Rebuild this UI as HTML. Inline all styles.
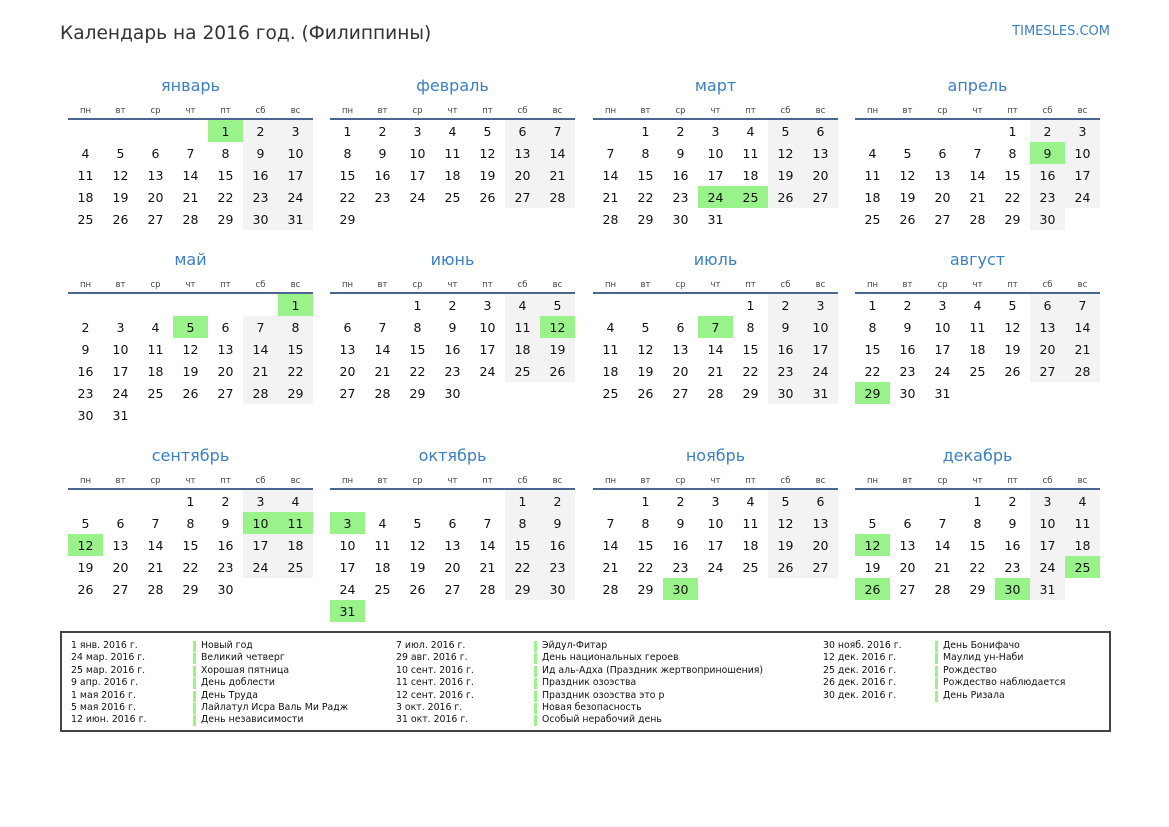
<!DOCTYPE html>
<html><head><meta charset="utf-8"><style>
*{margin:0;padding:0;box-sizing:border-box}
body{width:1169px;height:827px;background:#fff;font-family:"DejaVu Sans","Liberation Sans",sans-serif;position:relative;overflow:hidden;color:#111}
.ttl{position:absolute;left:60px;top:21px;font-size:18.6px;color:#333;line-height:26px}
.site{position:absolute;right:59px;top:23px;font-size:13px;color:#3a7fc1;line-height:18px}
.m{position:absolute;width:245px}
.mt{height:20px;line-height:22px;text-align:center;font-size:16px;color:#3b7fc4}
.hd{display:flex;margin-top:8px;height:15px;line-height:17px}
.hd span{width:35px;text-align:center;font-size:8.5px;color:#444}
.ln{height:2px;background:#4a6590}
table{border-collapse:collapse;border-spacing:0}
td{width:35px;height:22px;text-align:center;font-size:12.5px;padding:1px 0 0 0;line-height:21px}
td.w{background:#f3f3f3}
td.h{background:#99f28a}
.lg{position:absolute;left:60px;top:631px;width:1051px;height:101px;border:2px solid #444}
.c{position:absolute;top:7px;font-size:9.35px;line-height:12.4px;color:#111}
.b{position:relative;padding-left:8px}
.b:before{content:"";position:absolute;left:0;top:1px;width:3px;height:11px;background:#99f28a}
</style></head><body>
<div class="ttl">Календарь на 2016 год. (Филиппины)</div>
<div class="site">TIMESLES.COM</div>

<div class="m" style="left:68px;top:75px"><div class="mt">январь</div><div class="hd"><span>пн</span><span>вт</span><span>ср</span><span>чт</span><span>пт</span><span>сб</span><span>вс</span></div><div class="ln"></div>
<table>
<tr><td></td><td></td><td></td><td></td><td class="h">1</td><td class="w">2</td><td class="w">3</td></tr>
<tr><td>4</td><td>5</td><td>6</td><td>7</td><td>8</td><td class="w">9</td><td class="w">10</td></tr>
<tr><td>11</td><td>12</td><td>13</td><td>14</td><td>15</td><td class="w">16</td><td class="w">17</td></tr>
<tr><td>18</td><td>19</td><td>20</td><td>21</td><td>22</td><td class="w">23</td><td class="w">24</td></tr>
<tr><td>25</td><td>26</td><td>27</td><td>28</td><td>29</td><td class="w">30</td><td class="w">31</td></tr>
</table></div>

<div class="m" style="left:330px;top:75px"><div class="mt">февраль</div><div class="hd"><span>пн</span><span>вт</span><span>ср</span><span>чт</span><span>пт</span><span>сб</span><span>вс</span></div><div class="ln"></div>
<table>
<tr><td>1</td><td>2</td><td>3</td><td>4</td><td>5</td><td class="w">6</td><td class="w">7</td></tr>
<tr><td>8</td><td>9</td><td>10</td><td>11</td><td>12</td><td class="w">13</td><td class="w">14</td></tr>
<tr><td>15</td><td>16</td><td>17</td><td>18</td><td>19</td><td class="w">20</td><td class="w">21</td></tr>
<tr><td>22</td><td>23</td><td>24</td><td>25</td><td>26</td><td class="w">27</td><td class="w">28</td></tr>
<tr><td>29</td><td></td><td></td><td></td><td></td><td></td><td></td></tr>
</table></div>

<div class="m" style="left:593px;top:75px"><div class="mt">март</div><div class="hd"><span>пн</span><span>вт</span><span>ср</span><span>чт</span><span>пт</span><span>сб</span><span>вс</span></div><div class="ln"></div>
<table>
<tr><td></td><td>1</td><td>2</td><td>3</td><td>4</td><td class="w">5</td><td class="w">6</td></tr>
<tr><td>7</td><td>8</td><td>9</td><td>10</td><td>11</td><td class="w">12</td><td class="w">13</td></tr>
<tr><td>14</td><td>15</td><td>16</td><td>17</td><td>18</td><td class="w">19</td><td class="w">20</td></tr>
<tr><td>21</td><td>22</td><td>23</td><td class="h">24</td><td class="h">25</td><td class="w">26</td><td class="w">27</td></tr>
<tr><td>28</td><td>29</td><td>30</td><td>31</td><td></td><td></td><td></td></tr>
</table></div>

<div class="m" style="left:855px;top:75px"><div class="mt">апрель</div><div class="hd"><span>пн</span><span>вт</span><span>ср</span><span>чт</span><span>пт</span><span>сб</span><span>вс</span></div><div class="ln"></div>
<table>
<tr><td></td><td></td><td></td><td></td><td>1</td><td class="w">2</td><td class="w">3</td></tr>
<tr><td>4</td><td>5</td><td>6</td><td>7</td><td>8</td><td class="h">9</td><td class="w">10</td></tr>
<tr><td>11</td><td>12</td><td>13</td><td>14</td><td>15</td><td class="w">16</td><td class="w">17</td></tr>
<tr><td>18</td><td>19</td><td>20</td><td>21</td><td>22</td><td class="w">23</td><td class="w">24</td></tr>
<tr><td>25</td><td>26</td><td>27</td><td>28</td><td>29</td><td class="w">30</td><td></td></tr>
</table></div>

<div class="m" style="left:68px;top:249px"><div class="mt">май</div><div class="hd"><span>пн</span><span>вт</span><span>ср</span><span>чт</span><span>пт</span><span>сб</span><span>вс</span></div><div class="ln"></div>
<table>
<tr><td></td><td></td><td></td><td></td><td></td><td></td><td class="h">1</td></tr>
<tr><td>2</td><td>3</td><td>4</td><td class="h">5</td><td>6</td><td class="w">7</td><td class="w">8</td></tr>
<tr><td>9</td><td>10</td><td>11</td><td>12</td><td>13</td><td class="w">14</td><td class="w">15</td></tr>
<tr><td>16</td><td>17</td><td>18</td><td>19</td><td>20</td><td class="w">21</td><td class="w">22</td></tr>
<tr><td>23</td><td>24</td><td>25</td><td>26</td><td>27</td><td class="w">28</td><td class="w">29</td></tr>
<tr><td>30</td><td>31</td><td></td><td></td><td></td><td></td><td></td></tr>
</table></div>

<div class="m" style="left:330px;top:249px"><div class="mt">июнь</div><div class="hd"><span>пн</span><span>вт</span><span>ср</span><span>чт</span><span>пт</span><span>сб</span><span>вс</span></div><div class="ln"></div>
<table>
<tr><td></td><td></td><td>1</td><td>2</td><td>3</td><td class="w">4</td><td class="w">5</td></tr>
<tr><td>6</td><td>7</td><td>8</td><td>9</td><td>10</td><td class="w">11</td><td class="h">12</td></tr>
<tr><td>13</td><td>14</td><td>15</td><td>16</td><td>17</td><td class="w">18</td><td class="w">19</td></tr>
<tr><td>20</td><td>21</td><td>22</td><td>23</td><td>24</td><td class="w">25</td><td class="w">26</td></tr>
<tr><td>27</td><td>28</td><td>29</td><td>30</td><td></td><td></td><td></td></tr>
</table></div>

<div class="m" style="left:593px;top:249px"><div class="mt">июль</div><div class="hd"><span>пн</span><span>вт</span><span>ср</span><span>чт</span><span>пт</span><span>сб</span><span>вс</span></div><div class="ln"></div>
<table>
<tr><td></td><td></td><td></td><td></td><td>1</td><td class="w">2</td><td class="w">3</td></tr>
<tr><td>4</td><td>5</td><td>6</td><td class="h">7</td><td>8</td><td class="w">9</td><td class="w">10</td></tr>
<tr><td>11</td><td>12</td><td>13</td><td>14</td><td>15</td><td class="w">16</td><td class="w">17</td></tr>
<tr><td>18</td><td>19</td><td>20</td><td>21</td><td>22</td><td class="w">23</td><td class="w">24</td></tr>
<tr><td>25</td><td>26</td><td>27</td><td>28</td><td>29</td><td class="w">30</td><td class="w">31</td></tr>
</table></div>

<div class="m" style="left:855px;top:249px"><div class="mt">август</div><div class="hd"><span>пн</span><span>вт</span><span>ср</span><span>чт</span><span>пт</span><span>сб</span><span>вс</span></div><div class="ln"></div>
<table>
<tr><td>1</td><td>2</td><td>3</td><td>4</td><td>5</td><td class="w">6</td><td class="w">7</td></tr>
<tr><td>8</td><td>9</td><td>10</td><td>11</td><td>12</td><td class="w">13</td><td class="w">14</td></tr>
<tr><td>15</td><td>16</td><td>17</td><td>18</td><td>19</td><td class="w">20</td><td class="w">21</td></tr>
<tr><td>22</td><td>23</td><td>24</td><td>25</td><td>26</td><td class="w">27</td><td class="w">28</td></tr>
<tr><td class="h">29</td><td>30</td><td>31</td><td></td><td></td><td></td><td></td></tr>
</table></div>

<div class="m" style="left:68px;top:445px"><div class="mt">сентябрь</div><div class="hd"><span>пн</span><span>вт</span><span>ср</span><span>чт</span><span>пт</span><span>сб</span><span>вс</span></div><div class="ln"></div>
<table>
<tr><td></td><td></td><td></td><td>1</td><td>2</td><td class="w">3</td><td class="w">4</td></tr>
<tr><td>5</td><td>6</td><td>7</td><td>8</td><td>9</td><td class="h">10</td><td class="h">11</td></tr>
<tr><td class="h">12</td><td>13</td><td>14</td><td>15</td><td>16</td><td class="w">17</td><td class="w">18</td></tr>
<tr><td>19</td><td>20</td><td>21</td><td>22</td><td>23</td><td class="w">24</td><td class="w">25</td></tr>
<tr><td>26</td><td>27</td><td>28</td><td>29</td><td>30</td><td></td><td></td></tr>
</table></div>

<div class="m" style="left:330px;top:445px"><div class="mt">октябрь</div><div class="hd"><span>пн</span><span>вт</span><span>ср</span><span>чт</span><span>пт</span><span>сб</span><span>вс</span></div><div class="ln"></div>
<table>
<tr><td></td><td></td><td></td><td></td><td></td><td class="w">1</td><td class="w">2</td></tr>
<tr><td class="h">3</td><td>4</td><td>5</td><td>6</td><td>7</td><td class="w">8</td><td class="w">9</td></tr>
<tr><td>10</td><td>11</td><td>12</td><td>13</td><td>14</td><td class="w">15</td><td class="w">16</td></tr>
<tr><td>17</td><td>18</td><td>19</td><td>20</td><td>21</td><td class="w">22</td><td class="w">23</td></tr>
<tr><td>24</td><td>25</td><td>26</td><td>27</td><td>28</td><td class="w">29</td><td class="w">30</td></tr>
<tr><td class="h">31</td><td></td><td></td><td></td><td></td><td></td><td></td></tr>
</table></div>

<div class="m" style="left:593px;top:445px"><div class="mt">ноябрь</div><div class="hd"><span>пн</span><span>вт</span><span>ср</span><span>чт</span><span>пт</span><span>сб</span><span>вс</span></div><div class="ln"></div>
<table>
<tr><td></td><td>1</td><td>2</td><td>3</td><td>4</td><td class="w">5</td><td class="w">6</td></tr>
<tr><td>7</td><td>8</td><td>9</td><td>10</td><td>11</td><td class="w">12</td><td class="w">13</td></tr>
<tr><td>14</td><td>15</td><td>16</td><td>17</td><td>18</td><td class="w">19</td><td class="w">20</td></tr>
<tr><td>21</td><td>22</td><td>23</td><td>24</td><td>25</td><td class="w">26</td><td class="w">27</td></tr>
<tr><td>28</td><td>29</td><td class="h">30</td><td></td><td></td><td></td><td></td></tr>
</table></div>

<div class="m" style="left:855px;top:445px"><div class="mt">декабрь</div><div class="hd"><span>пн</span><span>вт</span><span>ср</span><span>чт</span><span>пт</span><span>сб</span><span>вс</span></div><div class="ln"></div>
<table>
<tr><td></td><td></td><td></td><td>1</td><td>2</td><td class="w">3</td><td class="w">4</td></tr>
<tr><td>5</td><td>6</td><td>7</td><td>8</td><td>9</td><td class="w">10</td><td class="w">11</td></tr>
<tr><td class="h">12</td><td>13</td><td>14</td><td>15</td><td>16</td><td class="w">17</td><td class="w">18</td></tr>
<tr><td>19</td><td>20</td><td>21</td><td>22</td><td>23</td><td class="w">24</td><td class="h">25</td></tr>
<tr><td class="h">26</td><td>27</td><td>28</td><td>29</td><td class="h">30</td><td class="w">31</td><td></td></tr>
</table></div>

<div class="lg">
<div class="c" style="left:9px">1 янв. 2016 г.<br>24 мар. 2016 г.<br>25 мар. 2016 г.<br>9 апр. 2016 г.<br>1 мая 2016 г.<br>5 мая 2016 г.<br>12 июн. 2016 г.</div>
<div class="c" style="left:131px"><div class="b">Новый год</div><div class="b">Великий четверг</div><div class="b">Хорошая пятница</div><div class="b">День доблести</div><div class="b">День Труда</div><div class="b">Лайлатул Исра Валь Ми Радж</div><div class="b">День независимости</div></div>
<div class="c" style="left:334px">7 июл. 2016 г.<br>29 авг. 2016 г.<br>10 сент. 2016 г.<br>11 сент. 2016 г.<br>12 сент. 2016 г.<br>3 окт. 2016 г.<br>31 окт. 2016 г.</div>
<div class="c" style="left:472px"><div class="b">Эйдул-Фитар</div><div class="b">День национальных героев</div><div class="b">Ид аль-Адха (Праздник жертвоприношения)</div><div class="b">Праздник озоэства</div><div class="b">Праздник озоэства это р</div><div class="b">Новая безопасность</div><div class="b">Особый нерабочий день</div></div>
<div class="c" style="left:761px">30 нояб. 2016 г.<br>12 дек. 2016 г.<br>25 дек. 2016 г.<br>26 дек. 2016 г.<br>30 дек. 2016 г.</div>
<div class="c" style="left:873px"><div class="b">День Бонифачо</div><div class="b">Маулид ун-Наби</div><div class="b">Рождество</div><div class="b">Рождество наблюдается</div><div class="b">День Ризала</div></div>
</div>
</body></html>
